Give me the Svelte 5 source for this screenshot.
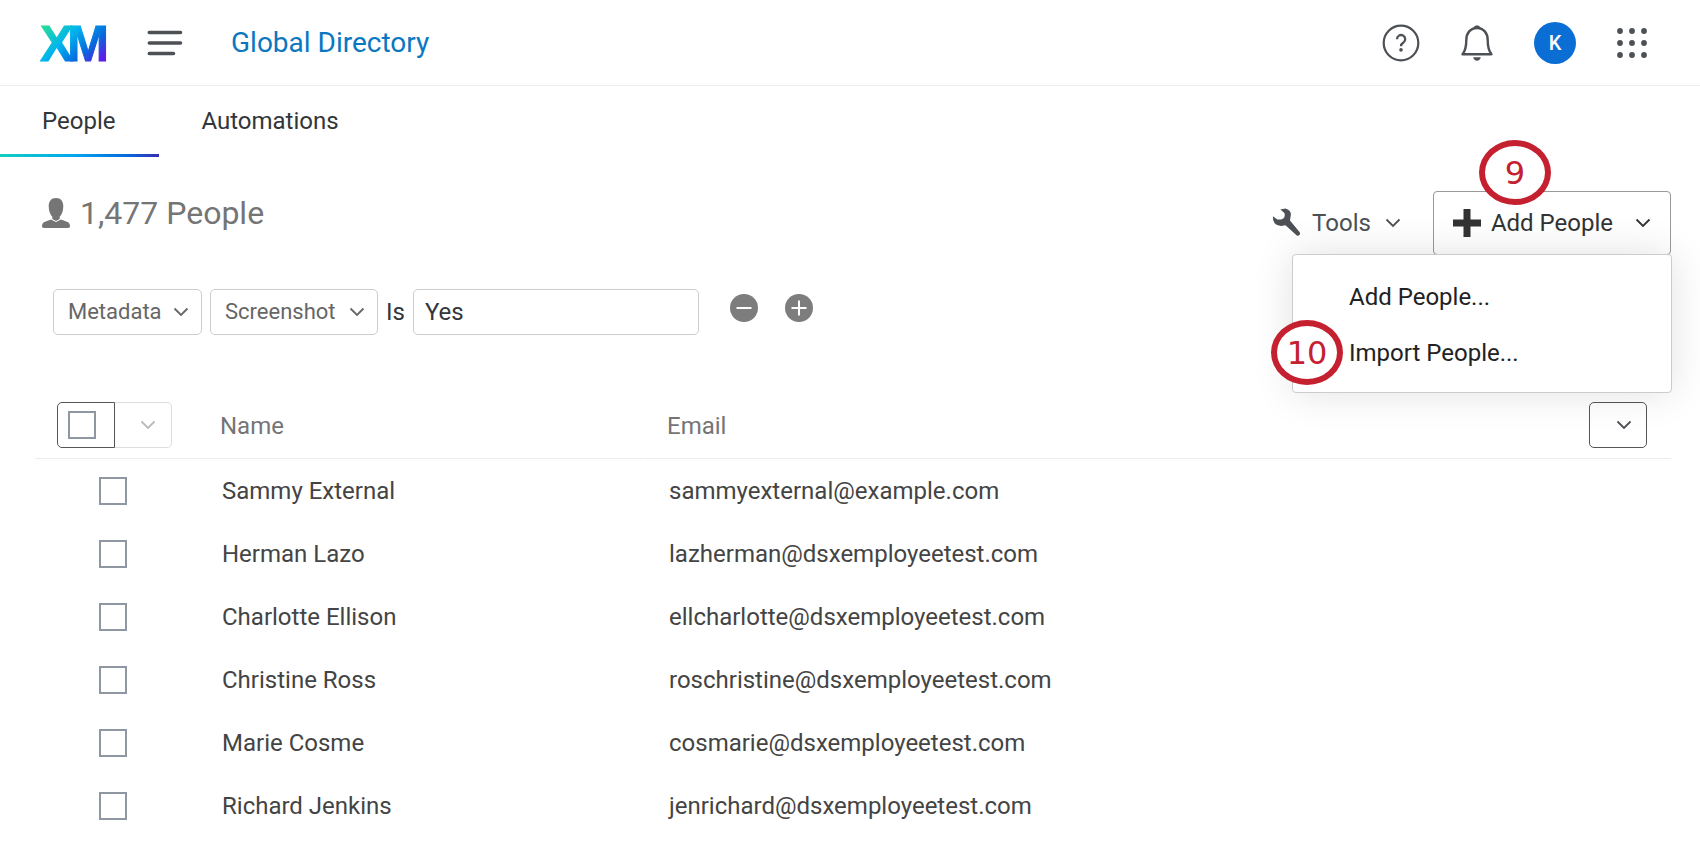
<script>
	let menuOpen = $state(true);
	let filterValue = $state("Yes");
	let selected = $state([]);

	const tabs = ["People", "Automations"];
	let activeTab = $state("People");

	const people = [
		{ name: "Sammy External", email: "sammyexternal@example.com" },
		{ name: "Herman Lazo", email: "lazherman@dsxemployeetest.com" },
		{ name: "Charlotte Ellison", email: "ellcharlotte@dsxemployeetest.com" },
		{ name: "Christine Ross", email: "roschristine@dsxemployeetest.com" },
		{ name: "Marie Cosme", email: "cosmarie@dsxemployeetest.com" },
		{ name: "Richard Jenkins", email: "jenrichard@dsxemployeetest.com" },
	];

	const allSelected = $derived(selected.length === people.length);

	const toggleAll = () => {
		selected = allSelected ? [] : people.map(p => p.email);
	};
</script>

{#snippet chevron()}
	<svg class="chevron" viewBox="0 0 16 10" width="16" height="10" aria-hidden="true">
		<path d="M1.5 1.5 L8 8 L14.5 1.5" fill="none" stroke="currentColor" stroke-width="1.8" />
	</svg>
{/snippet}

<header>
	<a class="logo" href="#home" aria-label="XM home">
		<!-- the two letters of the mark share an edge -->
		<svg width="72" height="64" viewBox="0 0 72 64">
			<defs>
				<linearGradient id="xm" gradientUnits="userSpaceOnUse" x1="10" y1="7" x2="58" y2="57">
					<stop offset="0" stop-color="#2ee08f" />
					<stop offset="0.4" stop-color="#00b4ef" />
					<stop offset="0.72" stop-color="#0768dd" />
					<stop offset="0.95" stop-color="#5a1ee6" />
				</linearGradient>
			</defs>
			<text x="2" y="50" fill="url(#xm)" stroke="url(#xm)" stroke-width="1">X<tspan dx="-6">M</tspan></text>
		</svg>
	</a>
	<button class="icon" aria-label="Menu">
		<svg width="36" height="26" viewBox="0 0 36 26" stroke="#4d5156" stroke-width="3.6" stroke-linecap="round">
			<path d="M2.3 2.5H33.5M2.3 13H33.5M2.3 23.5H26.5" />
		</svg>
	</button>
	<a class="crumb" href="#directory">Global Directory</a>
	<nav class="account" aria-label="Account">
		<button class="icon" aria-label="Help">
			<svg width="38" height="38" viewBox="0 0 38 38" fill="none" stroke="#4d5156">
				<circle cx="19" cy="19" r="17.3" stroke-width="2.2" />
				<path d="M15 15.2a4.1 4.1 0 1 1 6.4 3.3c-1.6 1-2.4 1.8-2.4 3.7" stroke-width="2.3" />
				<circle cx="19" cy="25.9" r="1.8" fill="#4d5156" stroke="none" />
			</svg>
		</button>
		<button class="icon" aria-label="Notifications">
			<svg width="34" height="38" viewBox="0 0 34 38" fill="none" stroke="#4d5156">
				<path d="M2.5 30.2c3-3.5 3.8-7.5 3.8-14.2c0-7 4.2-12 10.7-12s10.7 5 10.7 12c0 6.7.8 10.7 3.8 14.2z" stroke-width="2.4" stroke-linejoin="round" />
				<path d="M13 4.2q1.5-3 4-3t4 3zM13.2 33.3h7.6q-.8 3.4-3.8 3.4t-3.8-3.4z" fill="#4d5156" stroke="none" />
			</svg>
		</button>
		<button class="avatar" aria-label="Profile">K</button>
		<button class="icon" aria-label="Apps">
			<svg width="32" height="32" viewBox="0 0 32 32" fill="#4d5156">
				{#each [4, 16, 28] as cy}
					{#each [4, 16, 28] as cx}
						<circle {cx} {cy} r="2.9" />
					{/each}
				{/each}
			</svg>
		</button>
	</nav>
</header>

<nav class="tabs" aria-label="Directory">
	{#each tabs as tab}
		<button class:active={activeTab === tab} onclick={() => activeTab = tab}>{tab}</button>
	{/each}
</nav>

<main>
	<div class="toolbar">
		<h1>
			<svg width="28" height="30" viewBox="0 0 28 30" fill="#757575" aria-hidden="true">
				<path d="M14 0c4.800 0 7.300 3.400 7.300 8.200c0 4.300-1.600 8.600-3.600 10.600v2.200L14 23l-3.700-2v-2.200C8.300 16.800 6.700 12.500 6.700 8.200C6.700 3.400 9.200 0 14 0z" />
				<path d="M9 21.500l5 2.500l5-2.500l6 2.200c2.200.9 3 2.300 3 4.300c0 1.300-.6 2-2 2H2c-1.400 0-2-.7-2-2c0-2 .8-3.400 3-4.300z" />
			</svg>
			1,477 People
		</h1>
		<div class="actions">
			<button class="tools">
				<svg width="30" height="30" viewBox="0 0 30 30" aria-hidden="true">
					<path d="M8.3 1.6L13.5 .6Q18.8 2 18.9 6.5L18 12.5L27.7 24.2Q28.7 25.8 27.5 27Q26 28.3 24.5 27.2L13.5 17.3L9 18Q5 18 2.6 15.3Q.6 12.5 .9 8.2L5.4 11.500Q11 12 12.300 9.200Q13.500 6 11.800 4.500Z" fill="#4d5156" />
				</svg>
				<span>Tools</span>
				{@render chevron()}
			</button>
			<div class="dropdown">
				<button class="add" aria-expanded={menuOpen} onclick={() => menuOpen = !menuOpen}>
					<svg width="28" height="28" viewBox="0 0 28 28" aria-hidden="true">
						<path d="M10.5 0h7v10.5H28v7H17.5V28h-7V17.5H0v-7h10.5z" fill="#333" />
					</svg>
					<span>Add People</span>
					{@render chevron()}
				</button>
				<span class="step nine">9</span>
				{#if menuOpen}
					<div class="menu">
						<button>Add People...</button>
						<button>Import People...</button>
						<span class="step ten">10</span>
					</div>
				{/if}
			</div>
		</div>
	</div>

	<div class="filter">
		<label class="select metadata">
			<select aria-label="Filter type"><option>Metadata</option></select>
			{@render chevron()}
		</label>
		<label class="select field">
			<select aria-label="Filter field"><option>Screenshot</option></select>
			{@render chevron()}
		</label>
		<label for="filter-value">Is</label>
		<input id="filter-value" type="text" bind:value={filterValue} />
		<div class="round">
			<button class="icon" aria-label="Remove condition">
				<svg width="28" height="28" viewBox="0 0 28 28">
					<circle cx="14" cy="14" r="14" fill="#7d7d7d" />
					<path d="M6.5 14h15" stroke="#fff" stroke-width="2" />
				</svg>
			</button>
			<button class="icon" aria-label="Add condition">
				<svg width="28" height="28" viewBox="0 0 28 28">
					<circle cx="14" cy="14" r="14" fill="#7d7d7d" />
					<path d="M6.5 14h15M14 6.5v15" stroke="#fff" stroke-width="2" />
				</svg>
			</button>
		</div>
	</div>

	<table>
		<thead>
			<tr>
				<th class="pick">
					<div class="bulk">
						<label><input type="checkbox" aria-label="Select all" checked={allSelected} onchange={toggleAll} /></label>
						<button aria-label="Selection options" disabled>{@render chevron()}</button>
					</div>
				</th>
				<th class="name">Name</th>
				<th>Email</th>
				<th class="cols"><button aria-label="Choose columns">{@render chevron()}</button></th>
			</tr>
		</thead>
		<tbody>
			{#each people as person}
				<tr>
					<td class="check"><input type="checkbox" aria-label={person.name} value={person.email} bind:group={selected} /></td>
					<td>{person.name}</td>
					<td colspan="2">{person.email}</td>
				</tr>
			{/each}
		</tbody>
	</table>
</main>

<style>
	:global(body) {
		background: #fff;
		color: #32363a;
		font-family: Roboto, "Liberation Sans", sans-serif;
		font-size: 24px;
		line-height: 32px;
	}
	button, select, input {
		margin: 0;
		padding: 0;
		border: 0;
		background: none;
		color: inherit;
		font: inherit;
		box-sizing: border-box;
	}
	button { cursor: pointer; }
	svg { display: block; flex: none; }
	a { text-decoration: none; }

	header {
		display: flex;
		align-items: center;
		height: 85px;
		padding: 0 52px 0 38px;
		border-bottom: 1px solid #ececec;
	}
	.logo { margin-right: 37px; }
	.logo svg { overflow: visible; }
	.logo text {
		font-family: "Liberation Sans Narrow", "Liberation Sans", sans-serif;
		font-size: 50px;
		font-weight: bold;
	}
	.crumb {
		margin-left: 48px;
		color: #0a77c0;
		font-size: 28px;
	}
	.account {
		display: flex;
		align-items: center;
		gap: 40px;
		margin-left: auto;
	}
	.avatar {
		width: 42px;
		height: 42px;
		border-radius: 50%;
		background: #0b6ed4;
		color: #fff;
		font-size: 20px;
		font-weight: 500;
	}

	.tabs { display: flex; }
	.tabs button {
		height: 71px;
		padding: 2px 44px 0 42px;
		border-bottom: 3px solid transparent;
	}
	.tabs .active {
		border-image: linear-gradient(90deg, #12cfc0, #00a8f0 45%, #0768dd 80%, #3a2bb0) 1;
	}

	main { padding: 34px 29px 0 35px; }
	.toolbar {
		display: flex;
		align-items: flex-start;
		justify-content: space-between;
		padding-left: 7px;
	}
	h1 {
		display: flex;
		align-items: center;
		gap: 10px;
		margin: 0;
		color: #757575;
		font-size: 32px;
		font-weight: 400;
		line-height: 44px;
	}
	.actions { display: flex; }
	.tools, .add {
		display: flex;
		align-items: center;
		gap: 10px;
		height: 64px;
	}
	.tools {
		margin-right: 32px;
		color: #4d5156;
	}
	.tools .chevron { margin-left: 4px; }
	.dropdown { position: relative; }
	.add {
		padding: 0 19px;
		border: 1px solid #999;
		border-radius: 4px;
		color: #333;
	}
	.add .chevron { margin-left: 12px; }
	.menu {
		position: absolute;
		top: 63px;
		right: -1px;
		z-index: 2;
		width: 380px;
		box-sizing: border-box;
		padding: 14px 0 11px;
		border: 1px solid #ccc;
		border-radius: 4px;
		background: #fff;
		box-shadow: 0 0 40px rgba(0, 0, 0, 0.12);
		color: #222;
	}
	.menu button {
		display: block;
		width: 100%;
		height: 56px;
		padding-left: 56px;
		text-align: left;
	}
	.step {
		position: absolute;
		z-index: 3;
		display: grid;
		place-items: center;
		width: 72px;
		height: 65px;
		box-sizing: border-box;
		border: 6px solid #c5202f;
		border-radius: 50%;
		background: #fff;
		color: #c5202f;
		font-family: "DejaVu Sans", sans-serif;
		font-size: 32px;
	}
	.nine { top: -51px; left: 46px; }
	.ten { top: 65px; left: -22px; }

	.filter {
		display: flex;
		align-items: center;
		gap: 8px;
		margin-top: 34px;
		padding-left: 18px;
	}
	.select { display: grid; align-items: center; }
	.select select {
		grid-area: 1 / 1;
		appearance: none;
		width: 100%;
		height: 46px;
		padding-left: 14px;
		border: 1px solid #ccc;
		border-radius: 5px;
		color: #666;
		font-size: 22px;
	}
	.select .chevron {
		grid-area: 1 / 1;
		justify-self: end;
		margin-right: 13px;
		color: #666;
		pointer-events: none;
	}
	.metadata { width: 149px; }
	.field { width: 168px; }
	#filter-value {
		width: 286px;
		height: 46px;
		padding: 0 11px;
		border: 1px solid #ccc;
		border-radius: 5px;
	}
	.round {
		display: flex;
		gap: 27px;
		margin-left: 23px;
		padding-bottom: 8px;
	}

	table {
		width: calc(100% + 2px);
		margin: 58px -1px 0;
		table-layout: fixed;
		border-collapse: separate;
		border-spacing: 1px 0;
	}
	th {
		height: 65px;
		padding: 0 0 0 22px;
		border-bottom: 1px solid #ececec;
		color: #757575;
		font-weight: 400;
		text-align: left;
	}
	td {
		height: 63px;
		padding: 0 0 0 24px;
		color: #444;
	}
	.pick { width: 140px; }
	.name { width: 424px; }
	th.cols {
		width: 82px;
		padding-left: 26px;
	}
	td.check { padding-left: 64px; }
	input[type="checkbox"] {
		display: block;
		appearance: none;
		width: 28px;
		height: 28px;
		border: 2px solid #8f97a3;
		background: #fff;
	}
	input[type="checkbox"]:checked { background: #0b6ed4; }
	.bulk {
		display: flex;
		width: 115px;
		height: 46px;
		margin-bottom: 2px;
	}
	.bulk label {
		display: flex;
		align-items: center;
		width: 58px;
		box-sizing: border-box;
		padding-left: 10px;
		border: 1px solid #555;
		border-radius: 5px 0 0 5px;
	}
	.bulk button {
		display: grid;
		flex: 1;
		place-items: center;
		padding-left: 10px;
		border: 1px solid #ddd;
		border-left: 0;
		border-radius: 0 5px 5px 0;
		color: #bbb;
	}
	.cols button {
		display: grid;
		place-items: center;
		width: 58px;
		height: 46px;
		margin-bottom: 2px;
		padding-left: 12px;
		border: 1px solid #555;
		border-radius: 5px;
		color: #4d5156;
	}
</style>
